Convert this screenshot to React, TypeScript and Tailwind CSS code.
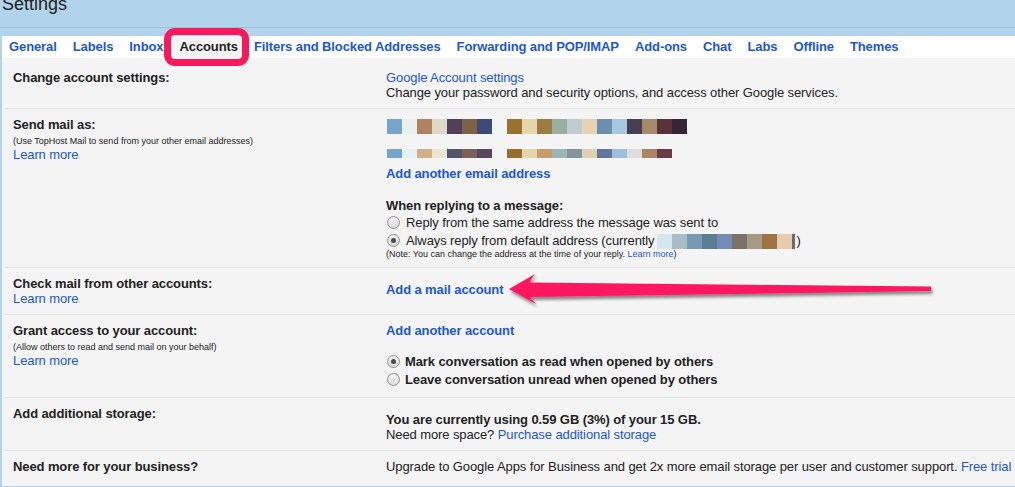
import React from "react";

const tabs = [
  "General",
  "Labels",
  "Inbox",
  "Accounts",
  "Filters and Blocked Addresses",
  "Forwarding and POP/IMAP",
  "Add-ons",
  "Chat",
  "Labs",
  "Offline",
  "Themes",
];

// blurred-out address pixels
const addrTop = [
  "bg-[#76a5cc]", "bg-[#e9f0ef]", "bg-[#b08261]", "bg-[#dcdac7]", "bg-[#52405a]",
  "bg-[#7d6246]", "bg-[#3d4a75]", "bg-[#f1f3f4]", "bg-[#9b7130]", "bg-[#e6d6ae]",
  "bg-[#9b7d42]", "bg-[#9aafa4]", "bg-[#bfcccd]", "bg-[#e8d2b3]", "bg-[#6d8fae]",
  "bg-[#a9c6e2]", "bg-[#473f50]", "bg-[#a68b6a]", "bg-[#5d3139]", "bg-[#342634]",
];

const addrBottom = [
  "bg-[#76a5cc]", "bg-[#e7eff1]", "bg-[#d0b088]", "bg-[#ebe5d3]", "bg-[#54546d]",
  "bg-[#7c6159]", "bg-[#5a465a]", "bg-[#f1f3f4]", "bg-[#9a6d2c]", "bg-[#e5d5ab]",
  "bg-[#c69c69]", "bg-[#9cb5b2]", "bg-[#84949f]", "bg-[#e1d1b2]", "bg-[#63759a]",
  "bg-[#9ebfdc]", "bg-[#dedcde]", "bg-[#ab8562]", "bg-[#6b3c47]",
];

const addrDefault = [
  "bg-[#d5e6ee]", "bg-[#a9bbc7]", "bg-[#7799b3]", "bg-[#5b7d96]", "bg-[#758bb7]",
  "bg-[#7a7167]", "bg-[#a79a85]", "bg-[#9d7441]", "bg-[#e6cbad]",
];

function Radio({ checked }: { checked?: boolean }) {
  return (
    <span className="relative ml-[1px] inline-block h-[13px] w-[13px] shrink-0 rounded-full border border-[#8f8f8f] bg-linear-to-b from-[#f4f4f4] to-[#d9d9d9]">
      {checked && (
        <span className="absolute left-[3px] top-[3px] h-[5px] w-[5px] rounded-full bg-[#4a4a4a]" />
      )}
    </span>
  );
}

function Link({ children, bold }: { children: React.ReactNode; bold?: boolean }) {
  return (
    <span className={bold ? "font-bold text-[#1c57cf]" : "text-[#1c57cf]"}>{children}</span>
  );
}

export default function App() {
  return (
    <div className="relative h-[487px] w-full overflow-hidden bg-[#b1d4ec] font-['Liberation_Sans',Arial,sans-serif] text-[13px] tracking-[-0.1px] text-[#222]">
      {/* Header */}
      <div className="flow-root h-[28px] border-b border-[#9ebdd7] pl-[2px]">
        <div className="-mt-[5px] text-[18px] leading-[18px] tracking-normal">Settings</div>
      </div>
      <div className="h-[8px]" />

      {/* Tabs */}
      <div className="ml-[2px] flex h-[22px] bg-white">
        {tabs.map((t, i) => (
          <div
            key={t}
            className={
              (i === 0 ? "pl-[7px] pr-[8px] " : "px-[8px] ") +
              (t === "Accounts"
                ? "whitespace-nowrap bg-[#f4f4f4] font-bold leading-[22px] text-[#222]"
                : "whitespace-nowrap font-bold leading-[22px] text-[#1c57cf]")
            }
          >
            {t}
          </div>
        ))}
      </div>

      {/* Rows */}
      <div className="ml-[2px] h-[428px] overflow-hidden bg-[#f4f4f4] leading-[15px]">
        {/* Change account settings */}
        <div className="ml-[3px] flex h-[51px] border-b border-[#e3e3e3]">
          <div className="w-[381px] shrink-0 pl-[8px] pt-[12px] font-bold">Change account settings:</div>
          <div className="pt-[12px] whitespace-nowrap">
            <Link>Google Account settings</Link>
            <div>Change your password and security options, and access other Google services.</div>
          </div>
        </div>

        {/* Send mail as */}
        <div className="ml-[3px] flex h-[159px] border-b border-[#e3e3e3]">
          <div className="w-[381px] shrink-0 pl-[8px] pt-[8px]">
            <div className="font-bold">Send mail as:</div>
            <div className="mt-[3px] text-[9px] leading-[12px] tracking-normal">(Use TopHost Mail to send from your other email addresses)</div>
            <Link>Learn more</Link>
          </div>
          <div className="pt-[10px] whitespace-nowrap">
            <div className="ml-[1px] flex h-[15px]">
              {addrTop.map((c, i) => (
                <div key={i} className={`w-[15px] ${c}`} />
              ))}
            </div>
            <div className="ml-[1px] mt-[15px] flex h-[9px]">
              {addrBottom.map((c, i) => (
                <div key={i} className={`w-[15px] ${c}`} />
              ))}
            </div>
            <div className="mt-[8px]">
              <Link bold>Add another email address</Link>
            </div>
            <div className="mt-[17px] font-bold">When replying to a message:</div>
            <div className="flex h-[18px] items-center gap-[6px]">
              <Radio />
              <span>Reply from the same address the message was sent to</span>
            </div>
            <div className="flex h-[18px] items-center gap-[6px]">
              <Radio checked />
              <span className="flex items-center">
                Always reply from default address (currently
                <span className="ml-[3px] mt-[3px] flex h-[15px]">
                  {addrDefault.map((c, i) => (
                    <span key={i} className={`w-[15px] ${c}`} />
                  ))}
                  <span className="w-[3px] bg-[#6b6b6b]" />
                </span>
                <span className="ml-[1px]">)</span>
              </span>
            </div>
            <div className="text-[9px] leading-[11px] tracking-normal">
              (Note: You can change the address at the time of your reply. <Link>Learn more</Link>)
            </div>
          </div>
        </div>

        {/* Check mail */}
        <div className="ml-[3px] flex h-[47px] border-b border-[#e3e3e3]">
          <div className="w-[381px] shrink-0 pl-[8px] pt-[8px]">
            <div className="font-bold">Check mail from other accounts:</div>
            <Link>Learn more</Link>
          </div>
          <div className="pt-[14px]">
            <Link bold>Add a mail account</Link>
          </div>
        </div>

        {/* Grant access */}
        <div className="ml-[3px] flex h-[83px] border-b border-[#e3e3e3]">
          <div className="w-[381px] shrink-0 pl-[8px] pt-[8px]">
            <div className="font-bold">Grant access to your account:</div>
            <div className="mt-[3px] text-[9px] leading-[12px] tracking-normal">(Allow others to read and send mail on your behalf)</div>
            <Link>Learn more</Link>
          </div>
          <div className="pt-[8px] whitespace-nowrap">
            <Link bold>Add another account</Link>
            <div className="mt-[14px] flex h-[18px] items-center gap-[5px] font-bold">
              <Radio checked />
              <span>Mark conversation as read when opened by others</span>
            </div>
            <div className="flex h-[18px] items-center gap-[5px] font-bold">
              <Radio />
              <span>Leave conversation unread when opened by others</span>
            </div>
          </div>
        </div>

        {/* Storage */}
        <div className="ml-[3px] flex h-[53px] border-b border-[#e3e3e3]">
          <div className="w-[381px] shrink-0 pl-[8px] pt-[8px] font-bold">Add additional storage:</div>
          <div className="pt-[14px] whitespace-nowrap">
            <div className="font-bold">You are currently using 0.59 GB (3%) of your 15 GB.</div>
            <div>
              Need more space? <Link>Purchase additional storage</Link>
            </div>
          </div>
        </div>

        {/* Business */}
        <div className="ml-[3px] flex h-[35px]">
          <div className="w-[381px] shrink-0 pl-[8px] pt-[8px] font-bold">Need more for your business?</div>
          <div className="pt-[8px] whitespace-nowrap">
            Upgrade to Google Apps for Business and get 2x more email storage per user and customer support.{" "}
            <Link>Free trial</Link>
          </div>
        </div>
      </div>

      {/* Annotation: box round the Accounts tab */}
      <div className="pointer-events-none absolute left-[164px] top-[28px] h-[38px] w-[85px] rounded-[11px] border-[7px] border-[#f8195c]" />

      {/* Annotation: arrow */}
      <svg className="pointer-events-none absolute left-0 top-0" width="1015" height="487" viewBox="0 0 1015 487">
        <defs>
          <filter id="sh" x="-5%" y="-50%" width="110%" height="200%">
            <feDropShadow dx="1.5" dy="3" stdDeviation="1.5" floodColor="#000" floodOpacity="0.45" />
          </filter>
        </defs>
        <path
          d="M509,289 L535,274 Q531,279 530,282.5 L931,286.5 L931,291 L530,297 Q532,300 536,304 Z"
          fill="#ff1660"
          filter="url(#sh)"
        />
      </svg>
    </div>
  );
}
